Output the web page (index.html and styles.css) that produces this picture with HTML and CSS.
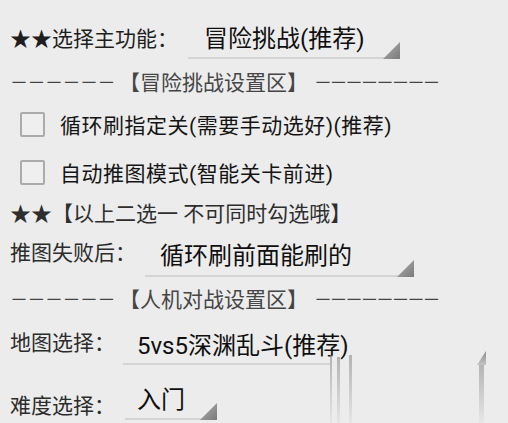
FILE: index.html
```html
<!DOCTYPE html>
<html lang="zh-CN">
<head>
<meta charset="utf-8">
<title>设置</title>
<link rel="stylesheet" href="styles.css">
</head>
<body>
<main class="app">
  <div class="row row-main">
    <span class="label label-main">★★选择主功能<span class="colon">：</span></span>
    <div class="spinner spinner-main"><span class="spinner-text">冒险挑战(推荐)</span></div>
  </div>

  <div class="heading heading-1"><span class="dash dash-left">－－－－－－</span>【冒险挑战设置区】<span class="dash dash-right">－－－－－－－－</span></div>

  <label class="check-row check-row-1"><span class="box"></span><span class="check-text">循环刷指定关(需要手动选好)(推荐)</span></label>
  <label class="check-row check-row-2"><span class="box"></span><span class="check-text">自动推图模式(智能关卡前进)</span></label>

  <div class="note">★★【以上二选一 不可同时勾选哦】</div>

  <div class="row row-fail">
    <span class="label">推图失败后<span class="colon">：</span></span>
    <div class="spinner spinner-fail"><span class="spinner-text">循环刷前面能刷的</span></div>
  </div>

  <div class="heading heading-2"><span class="dash dash-left">－－－－－－</span>【人机对战设置区】<span class="dash dash-right">－－－－－－－－</span></div>

  <div class="row row-map">
    <span class="label">地图选择<span class="colon">：</span></span>
    <div class="spinner spinner-map">
      <span class="spinner-text">5vs5深渊乱斗(推荐)</span>
      <span class="streak streak-a"></span>
      <span class="streak streak-b"></span>
      <span class="streak streak-c"></span>
      <span class="streak streak-d"></span>
    </div>
  </div>

  <div class="row row-level">
    <span class="label label-low">难度选择<span class="colon">：</span></span>
    <div class="spinner spinner-level"><span class="spinner-text">入门</span></div>
  </div>
</main>
</body>
</html>
```

FILE: styles.css
```css
html, body {
  margin: 0;
  padding: 0;
  background: #ececec;
}

body {
  font-family: Roboto, "Noto Sans CJK SC", sans-serif;
  font-weight: 400;
  color: #333;
  overflow: hidden;
}

.app {
  padding: 18px 0 0 10px;
  height: 423px;
  box-sizing: border-box;
}

.row {
  display: flex;
  align-items: center;
}

.label {
  font-size: 21px;
  line-height: 28px;
  color: #2c2c2c;
  white-space: nowrap;
}

.colon {
  font-family: "Noto Sans CJK TC", sans-serif;
}

.label-main {
  color: #1e1e1e;
}

.label-low {
  align-self: flex-end;
}

.row-main { height: 41px; align-items: flex-end; }
.row-main .label { padding-bottom: 6px; }

.row-fail { height: 50px; }
.row-map { height: 46px; }
.row-level { height: 55px; }

.spinner {
  position: relative;
  height: 40px;
  box-sizing: border-box;
  margin-left: 9px;
  padding-left: 15px;
  display: flex;
  align-items: center;
  border-bottom: 2px solid #d4d4d4;
  align-self: flex-end;
}

.spinner::after {
  content: "";
  position: absolute;
  right: 0;
  bottom: -2px;
  width: 17px;
  height: 17px;
  background: linear-gradient(135deg, #b0b0b0, #7a7a7a);
  clip-path: polygon(100% 0, 100% 100%, 0 100%);
}

.spinner-text {
  font-size: 24px;
  color: #0f0f0f;
  white-space: nowrap;
  padding-bottom: 3px;
}

.spinner-main { width: 212px; margin-left: 10px; padding-left: 16px; }
.spinner-fail { width: 269px; margin-left: 9px; }
.spinner-fail .spinner-text { padding-bottom: 5px; }
.spinner-map {
  width: 364px;
  margin-left: 8px;
  padding-left: 14px;
  border-bottom: none;
  background: linear-gradient(#d4d4d4, #d4d4d4) no-repeat left bottom / 207px 2px;
}
.spinner-map::after {
  width: 9px;
  height: 14px;
  bottom: auto;
  top: 26px;
  right: 1px;
  background: linear-gradient(#8a8a8a, #c4c4c4);
}
.spinner-level { width: 92px; margin-left: 10px; padding-left: 12px; }

.streak {
  position: absolute;
  width: 2px;
  background: linear-gradient(rgba(140,140,140,0.6), rgba(200,200,200,0.1));
}
.streak-a { left: 207px; top: 30px; height: 72px; }
.streak-b { left: 214px; top: 32px; height: 70px; width: 3px; }
.streak-c { left: 226px; top: 30px; height: 72px; width: 3px; }
.streak-d { left: 356px; top: 38px; height: 62px; width: 5px; }

.heading, .note {
  font-size: 21px;
  color: #454545;
  white-space: nowrap;
  display: flex;
  align-items: center;
}

.heading-1 { height: 42px; padding-top: 2px; box-sizing: border-box; }
.heading-2 { height: 42px; }

.dash {
  color: #444;
  font-size: 18px;
}
.dash-left { letter-spacing: -0.5px; margin-right: 4px; }
.dash-right { letter-spacing: -2.5px; margin-left: 6px; }

.check-row {
  display: flex;
  align-items: center;
  padding-left: 10px;
}
.check-row-1 { height: 46px; }
.check-row-2 { height: 50px; }

.box {
  width: 25px;
  height: 25px;
  box-sizing: border-box;
  border: 2px solid #ababab;
  border-radius: 2px;
  background: #efefef;
  flex: none;
}

.check-text {
  margin-left: 15px;
  font-size: 21px;
  letter-spacing: 0.5px;
  color: #141414;
  white-space: nowrap;
}

.note {
  height: 30px;
  color: #2e2e2e;
}
```
